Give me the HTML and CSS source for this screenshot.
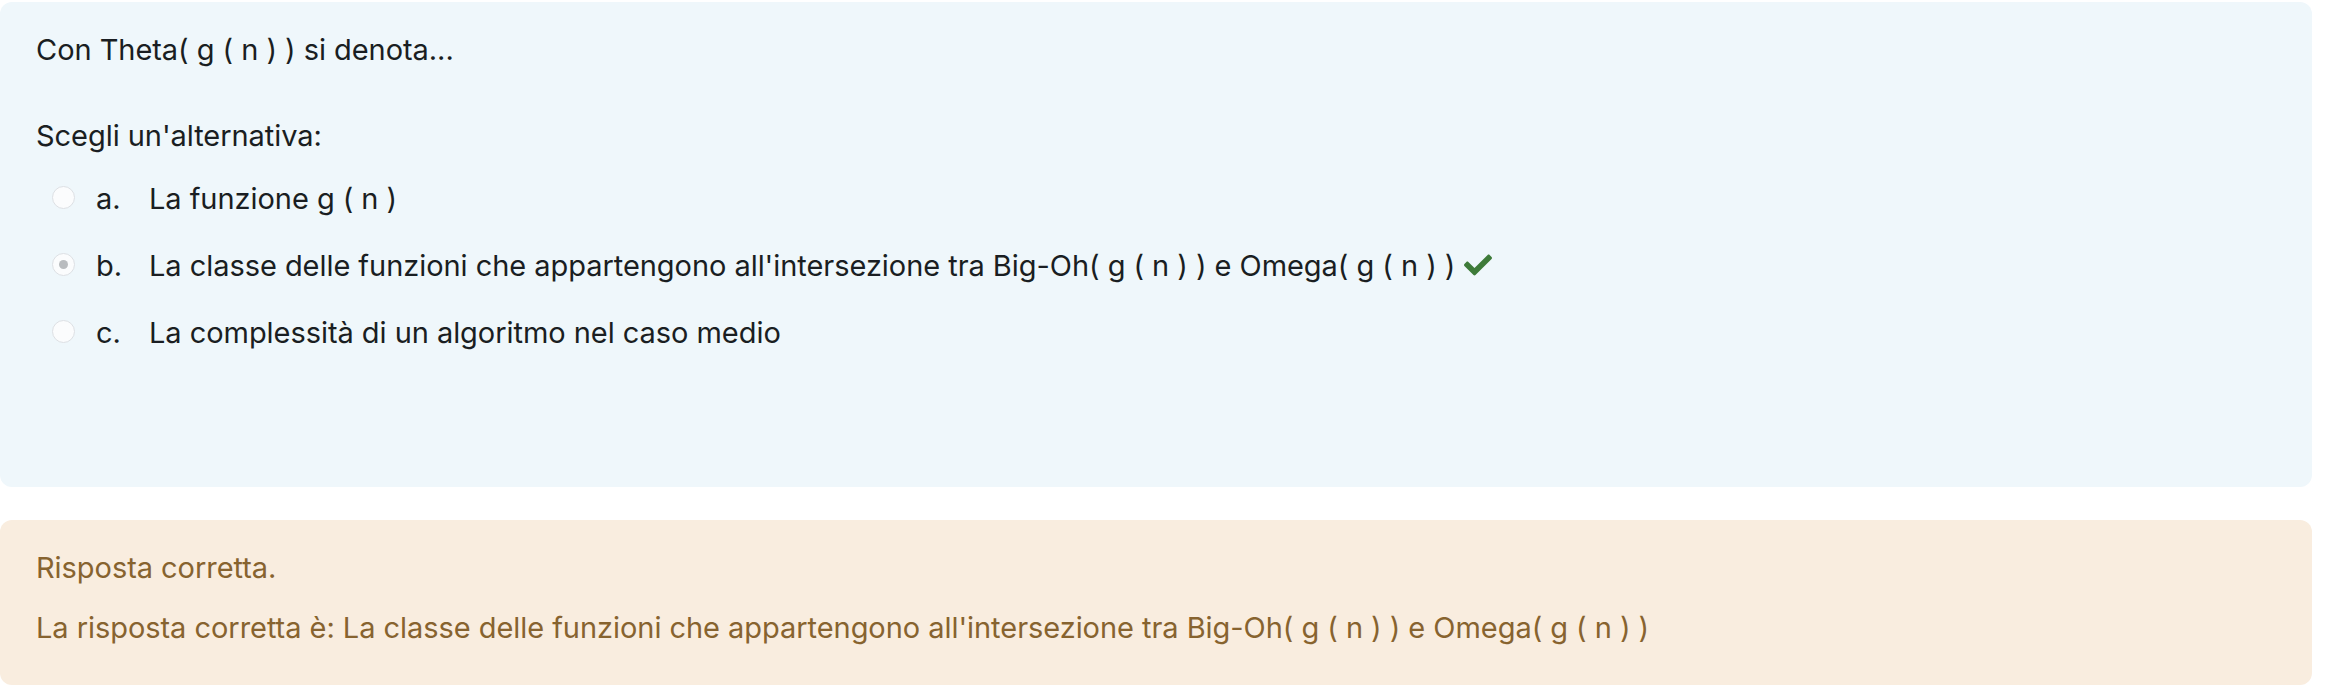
FILE: index.html
```html
<!DOCTYPE html>
<html lang="it">
<head>
<meta charset="utf-8">
<title>Domanda</title>
<link rel="stylesheet" href="styles.css">
</head>
<body>
<div class="page">
  <div class="formulation">
    <div class="qtext">Con Theta( g ( n ) ) si denota...</div>
    <div class="prompt">Scegli un'alternativa:</div>
    <div class="answers">
      <div class="answer">
        <span class="radio"></span>
        <span class="num">a.</span>
        <span class="atext">La funzione g ( n )</span>
      </div>
      <div class="answer">
        <span class="radio checked"></span>
        <span class="num">b.</span>
        <span class="atext">La classe delle funzioni che appartengono all'intersezione tra Big-Oh( g ( n ) ) e Omega( g ( n ) )<svg class="check" viewBox="0 0 512 512" aria-hidden="true"><path d="M173.898 439.404l-166.4-166.4c-9.997-9.997-9.997-26.206 0-36.204l36.203-36.204c9.997-9.998 26.207-9.998 36.204 0L192 312.69 432.095 72.596c9.997-9.997 26.207-9.997 36.204 0l36.203 36.204c9.997 9.997 9.997 26.206 0 36.204l-294.4 294.401c-9.998 9.997-26.207 9.997-36.204-.001z"/></svg></span>
      </div>
      <div class="answer">
        <span class="radio"></span>
        <span class="num">c.</span>
        <span class="atext">La complessità di un algoritmo nel caso medio</span>
      </div>
    </div>
  </div>
  <div class="outcome">
    <div class="feedback">Risposta corretta.</div>
    <div class="rightanswer">La risposta corretta è: La classe delle funzioni che appartengono all'intersezione tra Big-Oh( g ( n ) ) e Omega( g ( n ) )</div>
  </div>
</div>
</body>
</html>
```
FILE: styles.css
```css
html, body {
  margin: 0;
  padding: 0;
  background: #ffffff;
}
body {
  font-family: Inter, "Noto Sans", "Liberation Sans", sans-serif;
  font-size: 29px;
  letter-spacing: -0.05px;
  line-height: 45px;
  color: #1a1e22;
}
.page {
  width: 2312px;
  padding-top: 2px;
}
.formulation {
  background: #eff7fb;
  border-radius: 12px;
  padding: 25px 36px 132px 36px;
  height: 328px;
}
.qtext {
  height: 45px;
}
.prompt {
  margin-top: 41px;
}
.answers {
  margin-top: 18px;
  display: flex;
  flex-direction: column;
  gap: 22px;
}
.answer {
  display: flex;
  align-items: center;
  height: 45px;
}
.radio {
  box-sizing: border-box;
  width: 23px;
  height: 23px;
  border-radius: 50%;
  border: 1.5px solid #dde0e4;
  background: #fbfcfd;
  margin-left: 16px;
  margin-right: 21px;
  margin-top: -3px;
  display: flex;
  align-items: center;
  justify-content: center;
  flex: none;
}
.radio.checked::after {
  content: "";
  width: 9px;
  height: 9px;
  border-radius: 50%;
  background: #b9bcbf;
}
.num {
  width: 53px;
  flex: none;
}
.atext {
  white-space: nowrap;
}
.check {
  width: 28px;
  height: 28px;
  margin-left: 9px;
  vertical-align: -3px;
  fill: #3e7b39;
}
.outcome {
  margin-top: 33px;
  background: #f9eddf;
  border-radius: 12px;
  padding: 25px 36px 35px 36px;
  color: #87632f;
}
.rightanswer {
  margin-top: 15px;
}
```
